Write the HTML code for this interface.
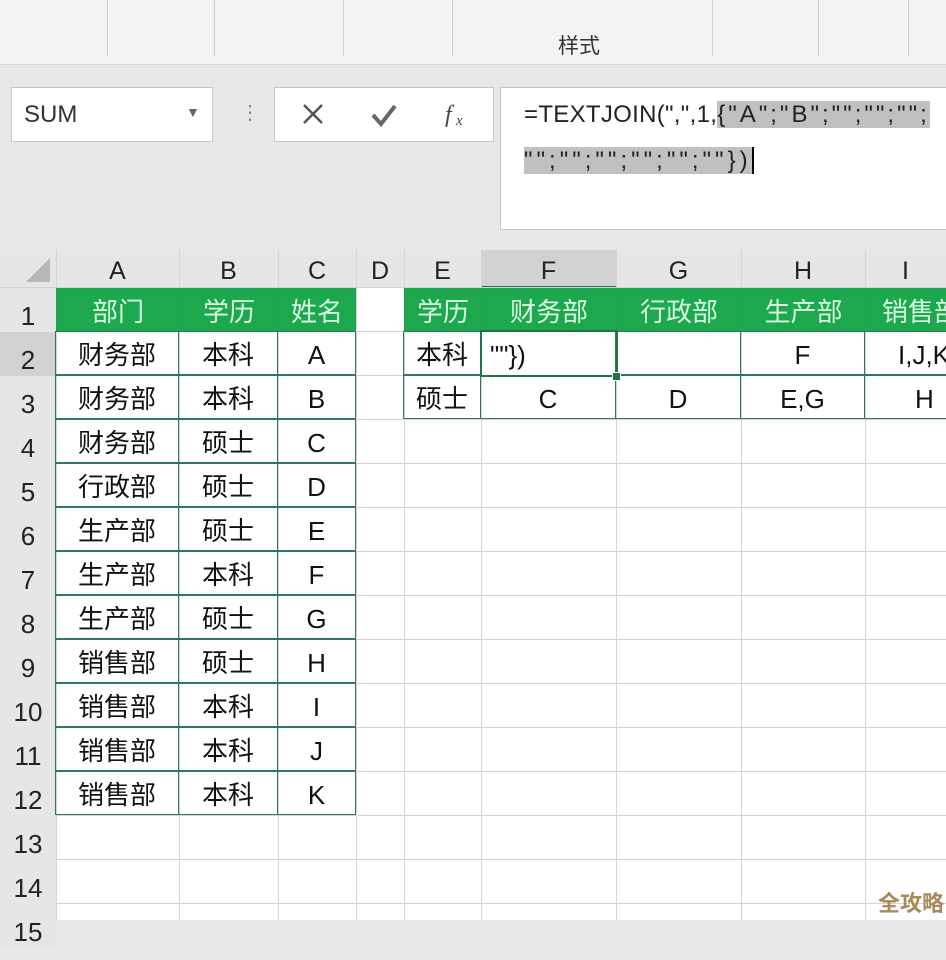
<!DOCTYPE html>
<html><head><meta charset="utf-8"><style>
body{margin:0;width:946px;height:920px;overflow:hidden;background:#e8e8e8;font-family:"Liberation Sans","Noto Sans CJK SC",sans-serif;position:relative}
.rib{position:absolute;left:0;top:0;width:946px;height:64px;background:#f3f3f3;border-bottom:1px solid #d6d6d6}
.vl{position:absolute;top:0;height:56px;width:1px;background:#cfcfcf}
.box{position:absolute;background:#fff;border:1px solid #c6c6c6}
.grid{position:absolute;left:0;top:250px;width:946px;height:670px;background:#fff}
.v{position:absolute;width:1px;background:#d4d4d4;top:250px;height:670px}
.h{position:absolute;height:1px;background:#d4d4d4;left:0;width:946px}
.c{position:absolute;height:44px;line-height:46px;text-align:center;font-size:26px;color:#111;white-space:nowrap;overflow:hidden;box-sizing:border-box}
.t{border:1px solid #2d7a55;margin:-1px 0 0 -1px}
.g{background:#1ea84e;color:#d8fbe3;border:1px solid #2a9a5a}
.rn{position:absolute;left:0;width:56px;height:44px;text-align:center;font-size:26px;color:#222;line-height:56px;background:#e6e6e6}
.ch{position:absolute;top:250px;height:38px;line-height:42px;text-align:center;font-size:25px;color:#222;background:#e6e6e6}
</style></head><body>
<div class="rib">
<div class="vl" style="left:107px"></div><div class="vl" style="left:214px"></div><div class="vl" style="left:343px"></div><div class="vl" style="left:452px"></div><div class="vl" style="left:712px"></div><div class="vl" style="left:818px"></div><div class="vl" style="left:908px"></div>
<div style="position:absolute;left:558px;top:30px;font-size:21px;color:#333">样式</div>
</div>
<div class="box" style="left:11px;top:87px;width:200px;height:53px"><span style="position:absolute;left:12px;top:13px;font-size:24px;color:#333">SUM</span><span style="position:absolute;left:174px;top:16px;font-size:14px;color:#666">▼</span></div>
<div style="position:absolute;left:240px;top:100px;font-size:20px;color:#888">⋮</div>
<div class="box" style="left:274px;top:87px;width:218px;height:53px">
<svg width="218" height="53"><path d="M29 17l18 18M47 17l-18 18" stroke="#555" stroke-width="2.5"/><path d="M98 27l8 9 14-18" stroke="#666" stroke-width="4" fill="none"/><text x="170" y="34" font-family="Liberation Serif" font-style="italic" font-size="24" fill="#444">f</text><text x="181" y="37" font-family="Liberation Serif" font-style="italic" font-size="15" fill="#444">x</text></svg></div>
<div class="box" style="left:500px;top:87px;width:450px;height:141px;border-right:none">
<div style="position:absolute;left:23px;top:4px;font-size:24px;color:#222;line-height:46px;letter-spacing:0.3px">=TEXTJOIN(",",1,<span style="background:#c0c0c0;letter-spacing:3px">{"A";"B";"";"";"";</span><br><span style="background:#c0c0c0;letter-spacing:4px">"";"";"";"";"";""})</span><span style="border-left:2px solid #000"></span></div></div>

<div class="grid"></div>
<div class="ch" style="left:0;width:56px"><svg width="56" height="38"><path d="M50 8V32H26Z" fill="#b8b8b8"/></svg></div>
<div class="ch" style="left:56px;width:123px">A</div><div class="ch" style="left:179px;width:99px">B</div><div class="ch" style="left:278px;width:78px">C</div><div class="ch" style="left:356px;width:48px">D</div><div class="ch" style="left:404px;width:77px">E</div><div class="ch" style="left:481px;width:135px;background:#d2d2d2;border-bottom:2px solid #217346;box-sizing:border-box">F</div><div class="ch" style="left:616px;width:125px">G</div><div class="ch" style="left:741px;width:124px">H</div><div class="ch" style="left:865px;width:81px">I</div>

<div class="v" style="left:56px"></div><div class="v" style="left:179px"></div><div class="v" style="left:278px"></div><div class="v" style="left:356px"></div><div class="v" style="left:404px"></div><div class="v" style="left:481px"></div><div class="v" style="left:616px"></div><div class="v" style="left:741px"></div><div class="v" style="left:865px"></div>
<div class="h" style="top:287px"></div><div class="h" style="top:331px"></div><div class="h" style="top:375px"></div><div class="h" style="top:419px"></div><div class="h" style="top:463px"></div><div class="h" style="top:507px"></div><div class="h" style="top:551px"></div><div class="h" style="top:595px"></div><div class="h" style="top:639px"></div><div class="h" style="top:683px"></div><div class="h" style="top:727px"></div><div class="h" style="top:771px"></div><div class="h" style="top:815px"></div><div class="h" style="top:859px"></div><div class="h" style="top:903px"></div>

<div class="rn" style="top:288px">1</div><div class="rn" style="top:332px;background:#d2d2d2">2</div><div class="rn" style="top:376px">3</div><div class="rn" style="top:420px">4</div><div class="rn" style="top:464px">5</div><div class="rn" style="top:508px">6</div><div class="rn" style="top:552px">7</div><div class="rn" style="top:596px">8</div><div class="rn" style="top:640px">9</div><div class="rn" style="top:684px">10</div><div class="rn" style="top:728px">11</div><div class="rn" style="top:772px">12</div><div class="rn" style="top:816px">13</div><div class="rn" style="top:860px">14</div><div class="rn" style="top:904px">15</div>

<!-- row1 -->
<div class="c g" style="left:56px;top:288px;width:124px">部门</div><div class="c g" style="left:179px;top:288px;width:100px">学历</div><div class="c g" style="left:278px;top:288px;width:78px">姓名</div>
<div class="c g" style="left:404px;top:288px;width:78px">学历</div><div class="c g" style="left:481px;top:288px;width:136px">财务部</div><div class="c g" style="left:616px;top:288px;width:126px">行政部</div><div class="c g" style="left:741px;top:288px;width:125px">生产部</div><div class="c g" style="left:865px;top:288px;width:90px;text-align:left;padding-left:16px">销售部</div>

<div class="c t" style="left:56px;top:332px;width:124px">财务部</div><div class="c t" style="left:179px;top:332px;width:100px">本科</div><div class="c t" style="left:278px;top:332px;width:79px">A</div>
<div class="c t" style="left:56px;top:376px;width:124px">财务部</div><div class="c t" style="left:179px;top:376px;width:100px">本科</div><div class="c t" style="left:278px;top:376px;width:79px">B</div>
<div class="c t" style="left:56px;top:420px;width:124px">财务部</div><div class="c t" style="left:179px;top:420px;width:100px">硕士</div><div class="c t" style="left:278px;top:420px;width:79px">C</div>
<div class="c t" style="left:56px;top:464px;width:124px">行政部</div><div class="c t" style="left:179px;top:464px;width:100px">硕士</div><div class="c t" style="left:278px;top:464px;width:79px">D</div>
<div class="c t" style="left:56px;top:508px;width:124px">生产部</div><div class="c t" style="left:179px;top:508px;width:100px">硕士</div><div class="c t" style="left:278px;top:508px;width:79px">E</div>
<div class="c t" style="left:56px;top:552px;width:124px">生产部</div><div class="c t" style="left:179px;top:552px;width:100px">本科</div><div class="c t" style="left:278px;top:552px;width:79px">F</div>
<div class="c t" style="left:56px;top:596px;width:124px">生产部</div><div class="c t" style="left:179px;top:596px;width:100px">硕士</div><div class="c t" style="left:278px;top:596px;width:79px">G</div>
<div class="c t" style="left:56px;top:640px;width:124px">销售部</div><div class="c t" style="left:179px;top:640px;width:100px">硕士</div><div class="c t" style="left:278px;top:640px;width:79px">H</div>
<div class="c t" style="left:56px;top:684px;width:124px">销售部</div><div class="c t" style="left:179px;top:684px;width:100px">本科</div><div class="c t" style="left:278px;top:684px;width:79px">I</div>
<div class="c t" style="left:56px;top:728px;width:124px">销售部</div><div class="c t" style="left:179px;top:728px;width:100px">本科</div><div class="c t" style="left:278px;top:728px;width:79px">J</div>
<div class="c t" style="left:56px;top:772px;width:124px">销售部</div><div class="c t" style="left:179px;top:772px;width:100px">本科</div><div class="c t" style="left:278px;top:772px;width:79px">K</div>

<div class="c t" style="left:404px;top:332px;width:78px">本科</div><div class="c t" style="left:616px;top:332px;width:126px"></div><div class="c t" style="left:741px;top:332px;width:125px">F</div><div class="c t" style="left:865px;top:332px;width:90px;text-align:left;padding-left:33px">I,J,K</div>
<div class="c t" style="left:404px;top:376px;width:78px">硕士</div><div class="c t" style="left:481px;top:376px;width:136px">C</div><div class="c t" style="left:616px;top:376px;width:126px">D</div><div class="c t" style="left:741px;top:376px;width:125px">E,G</div><div class="c t" style="left:865px;top:376px;width:90px;text-align:left;padding-left:50px">H</div>
<div class="c" style="left:480px;top:330px;width:138px;height:47px;border:2.5px solid #217346;text-align:left;padding-left:8px">""})</div>
<div style="position:absolute;left:612px;top:372px;width:7px;height:7px;background:#217346;border:1px solid #fff"></div>
<div style="position:absolute;left:878px;top:886px;font-size:22px;font-weight:bold;color:#a88a5a">全攻略</div>
</body></html>
